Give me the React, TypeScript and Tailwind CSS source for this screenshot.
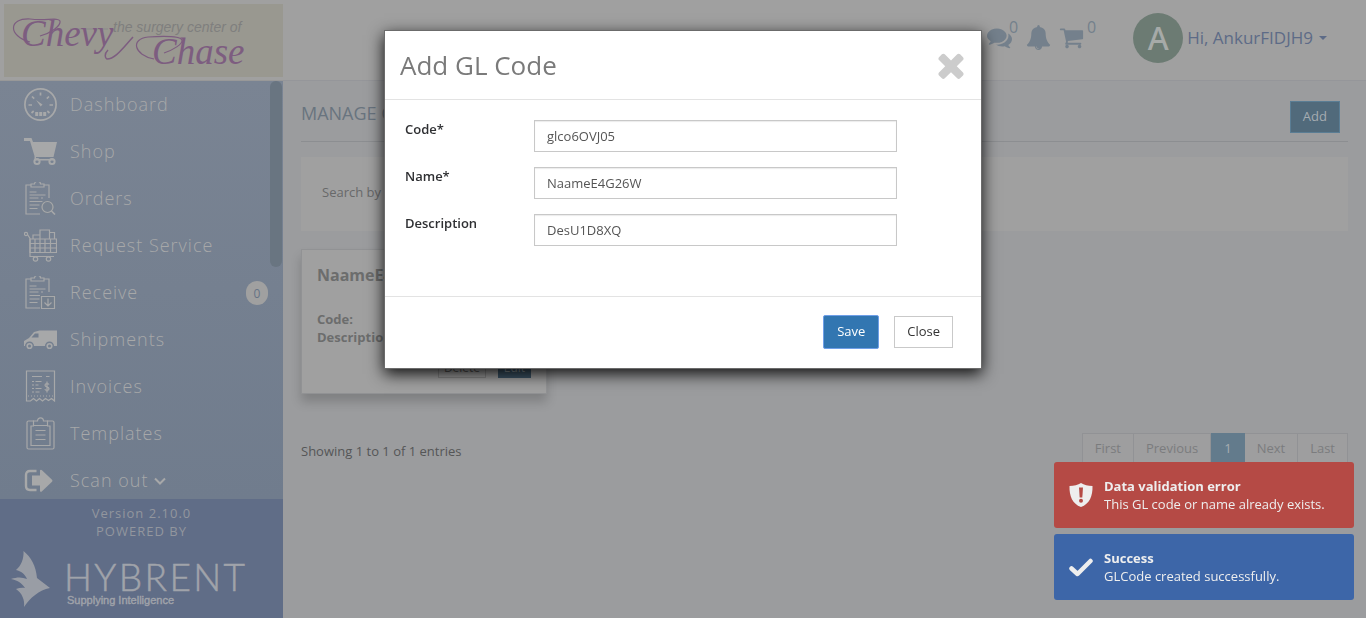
import React from "react";

const commentsPath =
  "M1408 768q0 139-94 257t-256.500 186.500-353.500 68.500q-86 0-176-16-124 88-278 128-36 9-86 16h-3q-11 0-20.500-8t-11.500-21q-1-3-1-6.500t.5-6.500 2-6l2.500-5 3.500-5.500 4-5 4.500-5 4-4.500q5-6 23-25t26-29.500 22.500-29 25-38.500 20.500-44q-124-72-195-177t-71-224q0-139 94-257t256.500-186.500 353.500-68.500 353.500 68.500 256.500 186.500 94 257zm384 256q0 120-71 224.500t-195 176.500q10 24 20.500 44t25 38.500 22.500 29 26 29.500 23 25q1 1 4 4.500t4.500 5 4 5 3.500 5.500l2.500 5 2 6 .5 6.500-1 6.500q-3 14-13 22t-22 7q-50-7-86-16-154-40-278-128-90 16-176 16-271 0-472-132 58 4 88 4 161 0 309-45t264-129q125-92 192-212t67-254q0-77-23-152 129 71 204 178t75 230z";
const bellPath =
  "M912 1696q0-16-16-16-59 0-101.500-42.500t-42.500-101.500q0-16-16-16t-16 16q0 73 51.500 124.500t124.500 51.500q16 0 16-16zm816-288q0 52-38 90t-90 38h-448q0 106-75 181t-181 75-181-75-75-181h-448q-52 0-90-38t-38-90q50-42 91-88t85-119.500 74.500-158.500 50-206 19.500-260q0-152 117-282.500t307-158.500q-8-19-8-39 0-40 28-68t68-28 68 28 28 68q0 20-8 39 190 28 307 158.500t117 282.500q0 139 19.500 260t50 206 74.500 158.500 85 119.500 91 88z";
const cartPath =
  "M704 1536q0 52-38 90t-90 38-90-38-38-90 38-90 90-38 90 38 38 90zm896 0q0 52-38 90t-90 38-90-38-38-90 38-90 90-38 90 38 38 90zm128-1088v512q0 24-16.500 42.500t-40.500 21.500l-1044 122q13 60 13 70 0 16-24 64h920q26 0 45 19t19 45-19 45-45 19h-1024q-26 0-45-19t-19-45q0-11 8-31.500t16-36 21.500-40 15.500-29.500l-177-823h-204q-26 0-45-19t-19-45 19-45 45-19h256q16 0 28.500 6.500t19.500 15.500 13 24.500 8 26 5.500 29.500 4.500 26h1201q26 0 45 19t19 45z";
const timesPath =
  "M1490 1322q0 40-28 68l-136 136q-28 28-68 28t-68-28l-294-294-294 294q-28 28-68 28t-68-28l-136-136q-28-28-28-68t28-68l294-294-294-294q-28-28-28-68t28-68l136-136q28-28 68-28t68 28l294 294 294-294q28-28 68-28t68 28l136 136q28 28 28 68t-28 68l-294 294 294 294q28 28 28 68z";

function Glyph({ d, className }: { d: string; className: string }) {
  return (
    <svg viewBox="0 0 1792 1792" className={className} fill="currentColor" aria-hidden="true">
      <path d={d} />
    </svg>
  );
}

function NavIcon({ children }: { children: React.ReactNode }) {
  return (
    <svg viewBox="0 0 33 33" className="size-[33px] shrink-0" fill="none" stroke="currentColor" strokeWidth="1.2" aria-hidden="true">
      {children}
    </svg>
  );
}

const clipboard = (
  <>
    <path d="M7 3H2v29h14M20 3h5v13" />
    <path d="M7 5V2h3.500a2 1.800 0 0 1 6 0H20v3z" />
    <path d="M5.500 10h7M5.500 13h16M5.500 16h9M17 16h2M5.500 19.500h13M5.500 23h10M5.500 26.500h8" />
  </>
);

const navItems: { label: string; icon: React.ReactNode; badge?: string; caret?: boolean }[] = [
  {
    label: "Dashboard",
    icon: (
      <>
        <circle cx="16.500" cy="16.500" r="15.600" strokeWidth="1.700" />
        <path
          d="M16.500 4.500v3M4.500 17h3.500M25.500 17H29M8 8.500l2.200 2.200M25 8.500l-2.200 2.200M7.500 25l2.200-2M25.500 25l-2.200-2"
          strokeWidth="1.700"
        />
        <path d="M12 12l6.500 4.500-1.800 2z" fill="currentColor" stroke="none" />
        <path d="M11.200 24h3v4h-3zM15.200 24h3v4h-3zM19.200 24h3v4h-3z" fill="currentColor" stroke="none" />
      </>
    ),
  },
  {
    label: "Shop",
    icon: (
      <>
        <path d="M0 3h7.500l1.500 4h24l-3.500 15H12v2h17v1.500H10.500V21L6 6H0z" fill="currentColor" stroke="none" />
        <circle cx="13" cy="26.500" r="2.600" strokeWidth="2" />
        <circle cx="28" cy="26.500" r="2.600" strokeWidth="2" />
      </>
    ),
  },
  {
    label: "Orders",
    icon: (
      <>
        {clipboard}
        <circle cx="23.500" cy="25" r="7" fill="#78828f" stroke="none" />
        <circle cx="23.500" cy="25" r="5.500" />
        <path d="M27.500 29l3.500 3.500" strokeWidth="1.600" />
      </>
    ),
  },
  {
    label: "Request Service",
    icon: (
      <>
        <circle cx="2" cy="5" r="1.600" />
        <path d="M3.500 5.500l2.500 4v18h24" />
        <path d="M6 10h26.500v13.500H6zM6 14.500h26.500M6 19h26.500M11 10v13.500M16 10v13.500M21 10v13.500M26.500 10v13.500" />
        <path d="M9 10V6h7v4M16 6V1h9.500v9M25.500 3.500h5V10" />
        <circle cx="11.500" cy="30" r="2.200" />
        <circle cx="24.500" cy="30" r="2.200" />
      </>
    ),
  },
  {
    label: "Receive",
    badge: "0",
    icon: (
      <>
        {clipboard}
        <path d="M16 19h16v14H16z" fill="#737e8c" stroke="none" />
        <path d="M17.500 20.500h13v12h-13zM24 22.500v7M20.500 26.500l3.500 3.500 3.500-3.500" />
      </>
    ),
  },
  {
    label: "Shipments",
    icon: (
      <>
        <path d="M15.500 7.500H33V23h-3a4.500 4.500 0 0 0-9 0H10a4.500 4.500 0 0 0-9 0H0v-5l5-3 5-6z" fill="currentColor" stroke="none" />
        <path d="M7.500 14.500l3.500-4h3.500v4z" fill="#727d8d" stroke="none" />
        <circle cx="5.500" cy="23" r="2.300" strokeWidth="1.600" />
        <circle cx="25.500" cy="23" r="2.300" strokeWidth="1.600" />
      </>
    ),
  },
  {
    label: "Invoices",
    icon: (
      <>
        <path d="M2.500 31V1h28v30l-3-2.500-3 2-3-2-3 2.500-3-2.500-3 2.500-3-2.500-3 2.500z" />
        <path d="M8 6.500h10M22 6.500h3.500M8 11.500h2M11.500 11.500h6M8 15h2M11.500 15h3M8 18.500h2M11.500 18.500h6M8 22h2M11.500 22h4" />
        <path d="M4 26h25" strokeDasharray="1 2" />
        <path d="M25 14.500c-1-1.500-4-1.200-4 .7s4 1.500 4 3.500-3.200 2.200-4.200.5M23 11.500v11" />
      </>
    ),
  },
  {
    label: "Templates",
    icon: (
      <>
        <path d="M10 4H4.500Q3 4 3 5.500v25Q3 32 4.500 32h24q1.500 0 1.500-1.500v-25Q30 4 28.500 4H23" />
        <path d="M10 9H7v19.500h19V9h-3" />
        <path d="M9.500 8.500V4h4a3 3.200 0 0 1 6 0h4v4.500zM11.500 13.500h10M11.500 18h10M11.500 22.500h10" />
      </>
    ),
  },
  {
    label: "Scan out",
    caret: true,
    icon: (
      <>
        <path d="M12.500 7H6Q2 7 2 11v11q0 4 4 4h6.500" strokeWidth="2.400" />
        <path d="M8 11.500h8V6.200q1-1 2 0l10 9.500q1 1 0 2l-10 9.500q-1 1-2 0V21.500H8z" fill="currentColor" stroke="none" />
      </>
    ),
  },
];

function Sidebar() {
  return (
    <aside className="flex w-[283px] shrink-0 flex-col">
      <div className="h-[81px] shrink-0 border-b border-[#989898] bg-[#a0a0a0] p-1">
        <svg viewBox="0 0 279 73" className="block h-[73px] w-[279px] bg-[#999890]" role="img" aria-label="The surgery center of Chevy Chase">
          <text x="109" y="28" fill="#7f7f7e" fontFamily="Liberation Sans" fontStyle="italic" fontSize="14">
            the surgery center of
          </text>
          <path d="M66 25h38" stroke="#89898a" strokeWidth="1" />
          <g fill="#7d5d80" fontFamily="Liberation Serif" fontStyle="italic" fontSize="37">
            <text x="17" y="42">Chevy</text>
            <text x="148" y="60">Chase</text>
          </g>
          <g fill="none" stroke="#7d5d80">
            <path d="M26 38C4 32 4 14 26 15c16 2 28-2 30 2 1 5-9 12-20 15" strokeWidth="1.200" />
            <path d="M150 55c-20-4-24-20-6-22 16-1 32-1 34 3 1 4-9 10-18 13" strokeWidth="1.200" />
            <path d="M104 46c-4 4-3 8-1 9 8 0 15-10 26-22" strokeWidth="1.500" />
          </g>
        </svg>
      </div>
      <nav className="relative min-h-0 flex-1 overflow-hidden bg-linear-to-b from-[#7a8493] to-[#707c8d] text-[#a7a8a9]">
        <ul>
          {navItems.map((item) => (
            <li key={item.label}>
              <a href="#" className="flex h-[47px] items-center pr-[15px] pl-6 text-[18px] font-light tracking-[1px]">
                <NavIcon>{item.icon}</NavIcon>
                <span className="ml-[13px]">{item.label}</span>
                {item.caret && (
                  <svg viewBox="0 0 12 8" className="ml-1.5 h-2 w-3" fill="none" stroke="currentColor" strokeWidth="2" aria-hidden="true">
                    <path d="M1 1.500l5 5 5-5" />
                  </svg>
                )}
                {item.badge && (
                  <span className="ml-auto flex h-6 w-[22px] items-center justify-center rounded-full bg-[#a0a0a0] pt-0.5 text-[12px] font-normal tracking-normal text-[#667386]">
                    {item.badge}
                  </span>
                )}
              </a>
            </li>
          ))}
        </ul>
        <div className="absolute top-0 right-px h-[186px] w-3 rounded-full bg-[#697581]" />
      </nav>
      <div className="h-[119px] shrink-0 bg-[#606d87] pt-[5px] text-center text-[13px] leading-[18px] tracking-[1px] text-[#92969e]">
        <p>Version 2.10.0</p>
        <p>POWERED BY</p>
        <svg viewBox="0 0 260 70" className="ml-2 block h-[70px] w-[260px]" role="img" aria-label="Hybrent, Supplying Intelligence">
          <path
            d="M15.500 11C23 17 28 26 29 38l13 10C31 50 22 58 16 67c1-7-2-14-8-18 3-1 6-1.500 9-1-3-5-8-8-14-9 6-2 11-2 16 0-2-5-6-8-11-9 5-4 8-11 7.500-19z"
            fill="#999da5"
          />
          <text x="56" y="51" fill="#a0a3aa" stroke="#a0a3aa" strokeWidth=".5" fontFamily="Lato" fontWeight="300" fontSize="37" letterSpacing="2.400">
            HYBRENT
          </text>
          <text x="59" y="64" fill="#a0a3aa" stroke="#a0a3aa" strokeWidth=".4" fontFamily="Liberation Sans" fontSize="11" letterSpacing="0">
            Supplying Intelligence
          </text>
        </svg>
      </div>
    </aside>
  );
}

function Header() {
  return (
    <header className="flex h-[81px] shrink-0 items-start justify-end border-b border-[#95969a] bg-[#a0a0a0] pt-[13px] pr-[39px] text-[#74808c]">
      <a href="#" aria-label="Messages" className="mt-3 flex">
        <Glyph d={commentsPath} className="size-[25px]" />
        <span className="-mt-2 -ml-[3px] text-[16px] leading-5">0</span>
      </a>
      <a href="#" aria-label="Notifications" className="mt-3 ml-2">
        <Glyph d={bellPath} className="size-[25px]" />
      </a>
      <a href="#" aria-label="Cart" className="mt-3 ml-2 flex">
        <Glyph d={cartPath} className="size-[25px]" />
        <span className="-mt-2 ml-[3px] text-[16px] leading-5">0</span>
      </a>
      <a href="#" className="ml-[37px] flex items-center text-[#5d6b87]">
        <span className="flex size-[50px] items-center justify-center rounded-full bg-[#6c7b73] font-['Noto_Sans'] text-[32px] font-medium text-[#a6aaa8]">
          A
        </span>
        <span className="ml-1 text-[17px]">Hi, AnkurFIDJH9</span>
        <span className="ml-1.5 border-x-4 border-t-4 border-x-transparent border-t-[#5d6b87]" />
      </a>
    </header>
  );
}

const pages = ["First", "Previous", "1", "Next", "Last"];

function Content() {
  return (
    <main className="flex-1 px-[18px]">
      <div className="flex h-[61px] items-end justify-between border-b border-[#8c8e91] pr-2 pb-2">
        <h1 className="pb-1.5 text-[18px] leading-7 text-[#69747f]">MANAGE GL CODES</h1>
        <button type="button" className="h-8 border border-[#5a7d94] bg-[#516a7b] px-3 text-[13px] text-[#a5acb1]">
          Add
        </button>
      </div>
      <section className="mt-[15px] flex h-[74px] items-center bg-[#a0a0a0] px-[21px] pb-0.5 text-[13px] text-[#68696a]">
        Search by
      </section>
      <article className="mt-[18px] flex h-[145px] w-[246px] flex-col border border-[#919294] bg-[#a0a0a0] p-[15px] text-[13px] leading-[18px] text-[#6c6d6d] shadow-[0_8px_10px_rgba(0,0,0,0.18)]">
        <h2 className="text-[16px] leading-5 font-bold">NaameE4G26W</h2>
        <dl className="mt-[25px] grid grid-cols-2">
          <dt className="font-bold">Code:</dt>
          <dd>glco6OVJ05</dd>
          <dt className="font-bold">Description:</dt>
          <dd>DesU1D8XQ</dd>
        </dl>
        <div className="mt-auto flex justify-end gap-3 text-[12px]">
          <button type="button" className="h-6 w-12 border border-[#888888] pt-1 leading-4 text-[#555555]">Delete</button>
          <button type="button" className="h-6 w-[33px] bg-[#3d5567] pt-1 leading-4 text-[#8d98a0]">Edit</button>
        </div>
      </article>
      <div className="mt-[39px] flex items-center justify-between text-[13px]">
        <p className="pt-1.5 text-[#555657]">Showing 1 to 1 of 1 entries</p>
        <ul className="flex h-8 border-l border-[#919295] bg-[#9e9e9f] text-[#7b7c7e]">
          {pages.map((page) =>
            page === "1" ? (
              <li key={page}>
                <a href="#" className="flex h-full items-center bg-[#637b8c] px-[13px] text-[#a7adb1]">{page}</a>
              </li>
            ) : (
              <li key={page}>
                <a href="#" className="flex h-full items-center border-y border-r border-[#919295] px-3">{page}</a>
              </li>
            )
          )}
        </ul>
      </div>
    </main>
  );
}

const fields = [
  { id: "code", label: "Code*", value: "glco6OVJ05" },
  { id: "name", label: "Name*", value: "NaameE4G26W" },
  { id: "description", label: "Description", value: "DesU1D8XQ" },
];

function Modal() {
  return (
    <div className="fixed inset-0 flex items-start justify-center pt-[30px]">
      <form
        role="dialog"
        aria-label="Add GL Code"
        className="w-[598px] border border-[#6b6b6b] bg-white text-[13px] shadow-[0_5px_15px_rgba(0,0,0,0.9)]"
        onSubmit={(event) => event.preventDefault()}
      >
        <div className="flex h-[69px] items-center justify-between border-b border-[#e3e3e3] pr-[11px] pl-[15px]">
          <h2 className="text-[26px] text-[#7a7a7a]">Add GL Code</h2>
          <button type="button" aria-label="Dismiss" className="text-[#cccccc]">
            <Glyph d={timesPath} className="size-[38px]" />
          </button>
        </div>
        <div className="flex h-[197px] flex-col gap-[15px] border-b border-[#e3e3e3] px-5 pt-5">
          {fields.map((field) => (
            <div key={field.id} className="flex">
              <label htmlFor={field.id} className="w-[129px] font-semibold text-[#2f3033]">{field.label}</label>
              <input
                id={field.id}
                defaultValue={field.value}
                className="h-8 w-[363px] border border-[#c8c8c8] px-3 text-[#555555] shadow-[inset_0_1px_1px_rgba(0,0,0,0.08)] outline-none"
              />
            </div>
          ))}
        </div>
        <div className="flex h-[71px] items-center justify-end gap-[15px] pr-7 pb-px">
          <button type="submit" className="h-[34px] w-14 rounded-xs border border-[#6f9fe8] bg-[#3276b1] text-white">Save</button>
          <button type="button" className="h-8 border border-[#c9c9c9] px-3 text-[#333333]">Close</button>
        </div>
      </form>
    </div>
  );
}

function Toasts() {
  return (
    <div className="fixed right-3 bottom-[18px] flex w-[300px] flex-col gap-1.5 text-[13px] leading-[18px] text-[#eeeeee]">
      <div role="alert" className="flex h-[66px] items-center rounded-[3px] bg-[#b54a45] px-[15px]">
        <svg viewBox="0 0 24 24" className="mr-[11px] size-6" aria-hidden="true">
          <path d="M12 0c3 2 7 3 11.500 3 .3 10-3 18-11.500 21C3.500 21 .2 13 .5 3 5 3 9 2 12 0z" fill="#eeeeee" />
          <path d="M10 4.500h4l-.7 10h-2.600z" fill="#b54a45" />
          <circle cx="12" cy="17.700" r="2" fill="#b54a45" />
        </svg>
        <div>
          <p className="font-bold">Data validation error</p>
          <p>This GL code or name already exists.</p>
        </div>
      </div>
      <div role="status" className="flex h-[66px] items-center rounded-[3px] bg-[#3d66a8] px-[15px]">
        <svg viewBox="0 0 24 24" className="mr-[11px] size-6" fill="none" stroke="#eeeeee" strokeWidth="4.500" aria-hidden="true">
          <path d="M2.500 13.500l6 5.500L21.500 6" strokeLinejoin="round" strokeLinecap="round" />
        </svg>
        <div>
          <p className="font-bold">Success</p>
          <p>GLCode created successfully.</p>
        </div>
      </div>
    </div>
  );
}

export default function App() {
  return (
    <div className="flex h-screen overflow-hidden bg-[#9b9c9e] font-['Open_Sans',sans-serif]">
      <Sidebar />
      <div className="flex min-w-0 flex-1 flex-col">
        <Header />
        <Content />
      </div>
      <Modal />
      <Toasts />
    </div>
  );
}
